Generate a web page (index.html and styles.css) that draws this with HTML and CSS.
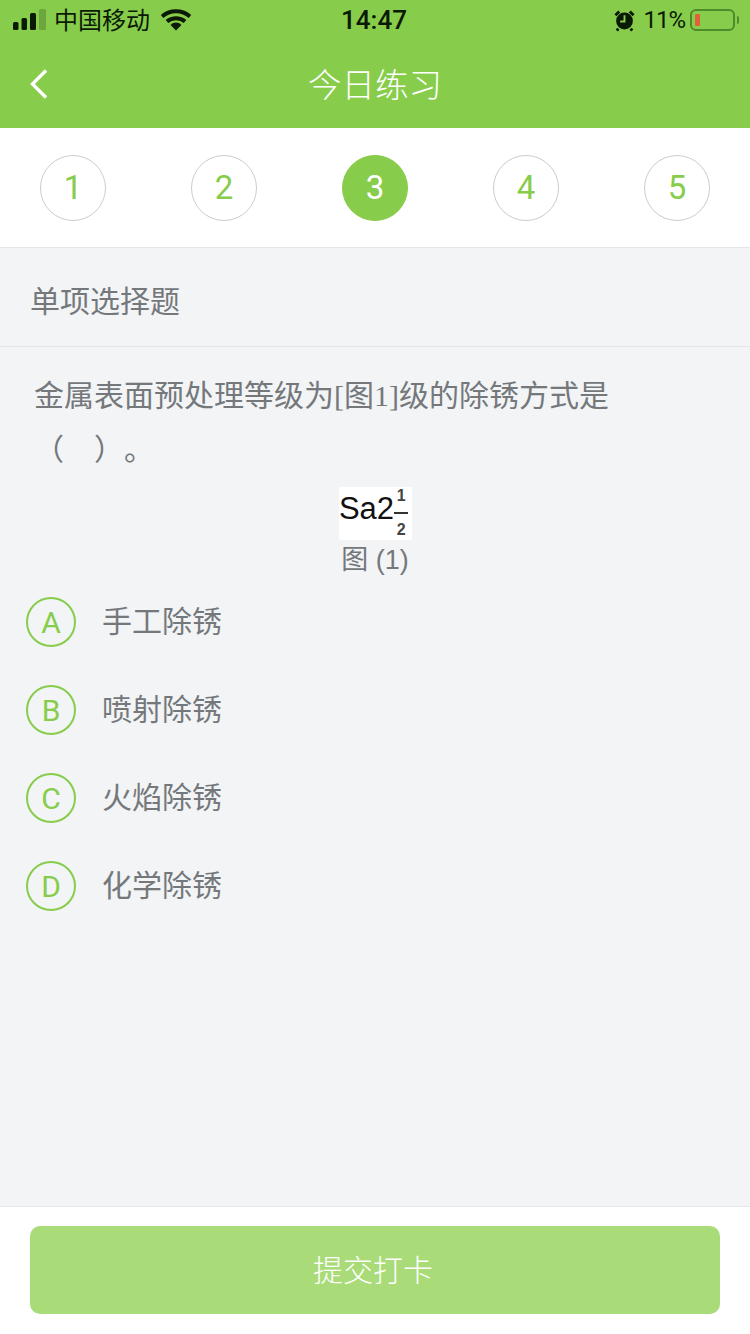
FILE: index.html
```html
<!DOCTYPE html>
<html lang="zh-CN">
<head>
    <meta charset="UTF-8">
    <meta name="viewport" content="width=device-width, initial-scale=1.0">
    <title>今日练习</title>
    <link rel="stylesheet" href="styles.css">
</head>
<body>
    <div class="page">
        <!-- Status bar and title -->
        <header class="top">
            <div class="status-bar">
                <div class="status-left">
                    <svg class="signal" width="36" height="24" viewBox="0 0 36 24">
                        <rect x="0" y="14" width="5.5" height="8" rx="1.5" fill="#0b1a05"/>
                        <rect x="8.5" y="10" width="5.5" height="12" rx="1.5" fill="#0b1a05"/>
                        <rect x="17" y="5" width="6" height="17" rx="1.5" fill="#0b1a05"/>
                        <rect x="26" y="1" width="7" height="21" rx="1.5" fill="#6ba63f"/>
                    </svg>
                    <span class="carrier">中国移动</span>
                    <svg class="wifi" width="30" height="22" viewBox="0 0 30 22">
                        <path d="M1 7.5C9 .5 21 .5 29 7.5" fill="none" stroke="#0b1a05" stroke-width="4"/>
                        <path d="M6 12.5C11 8.3 19 8.3 24 12.5" fill="none" stroke="#0b1a05" stroke-width="4"/>
                        <path d="M9.6 16C12.8 12.8 17.2 12.8 20.4 16L15 21.5Z" fill="#0b1a05"/>
                    </svg>
                </div>
                <div class="time">14:47</div>
                <div class="status-right">
                    <svg class="alarm" width="21" height="23" viewBox="0 0 22 24">
                        <circle cx="11" cy="12.5" r="8.8" fill="#0b1a05"/>
                        <path d="M1.5 6.5L5.5 2.5M20.5 6.5L16.5 2.5M4.5 20.5L3 22.5M17.5 20.5L19 22.5" stroke="#0b1a05" stroke-width="3" fill="none"/>
                        <path d="M11 6.5V13H6.5" stroke="#87cd4b" stroke-width="2" fill="none"/>
                    </svg>
                    <span class="percent">11%</span>
                    <div class="battery"><div class="battery-level"></div></div>
                    <div class="battery-cap"></div>
                </div>
            </div>
            <div class="nav">
                <svg class="back" width="20" height="32" viewBox="0 0 20 32">
                    <path d="M17 2.5L3.5 16L17 29.5" fill="none" stroke="#fff" stroke-width="3.4"/>
                </svg>
                <h1>今日练习</h1>
            </div>
        </header>

        <!-- Question numbers -->
        <div class="steps">
            <div class="step">1</div>
            <div class="step">2</div>
            <div class="step active">3</div>
            <div class="step">4</div>
            <div class="step">5</div>
        </div>

        <main class="content">
            <div class="type-label">单项选择题</div>
            <div class="question">金属表面预处理等级为<span class="serif">[图1]</span>级的除锈方式是<br>（　）。</div>

            <div class="figure">
                <div class="formula">
                    <span class="formula-main">Sa2</span>
                    <span class="fraction"><span>1</span><span class="fraction-bottom">2</span></span>
                </div>
                <div class="caption">图 (1)</div>
            </div>

            <div class="options">
                <div class="option"><div class="letter">A</div><div class="option-text">手工除锈</div></div>
                <div class="option"><div class="letter">B</div><div class="option-text">喷射除锈</div></div>
                <div class="option"><div class="letter">C</div><div class="option-text">火焰除锈</div></div>
                <div class="option"><div class="letter">D</div><div class="option-text">化学除锈</div></div>
            </div>
        </main>

        <footer class="bottom">
            <button class="submit-button" type="button">提交打卡</button>
        </footer>
    </div>
</body>
</html>
```

FILE: styles.css
```css
* {
    box-sizing: border-box;
}

body {
    margin: 0;
    font-family: "Noto Sans CJK SC", "Liberation Sans", sans-serif;
    background-color: #f2f4f6;
    color: #75787b;
}

.page {
    width: 750px;
    height: 1334px;
    display: flex;
    flex-direction: column;
    overflow: hidden;
}

.top {
    height: 128px;
    background-color: #87cd4b;
    flex-shrink: 0;
}

.status-bar {
    height: 40px;
    padding: 0 11px 0 13px;
    display: flex;
    align-items: center;
    justify-content: space-between;
    color: #0b1a05;
}

.status-left,
.status-right {
    width: 300px;
    display: flex;
    align-items: center;
}

.status-right {
    justify-content: flex-end;
}

.signal {
    margin-right: 5px;
}

.carrier {
    font-size: 24px;
    line-height: 38px;
    margin-bottom: 2px;
}

.wifi {
    margin-left: 11px;
}

.time {
    margin-left: -4px;
    font-family: Roboto, "Liberation Sans", sans-serif;
    font-size: 26px;
    font-weight: 500;
}

.alarm {
    margin-right: 8px;
}

.percent {
    font-family: Roboto, "Liberation Sans", sans-serif;
    font-size: 24px;
    letter-spacing: -1px;
    margin-right: 5px;
}

.battery {
    width: 45px;
    height: 22px;
    padding: 3px;
    border: 2px solid #4f8a2c;
    border-radius: 6px;
}

.battery-level {
    width: 5px;
    height: 100%;
    background-color: #e2603a;
    border-radius: 1px;
}

.battery-cap {
    width: 2px;
    height: 8px;
    margin-left: 2px;
    background-color: #4f8a2c;
    border-radius: 0 2px 2px 0;
}

.nav {
    height: 88px;
    padding-left: 29px;
    display: flex;
    align-items: center;
    position: relative;
}

.nav h1 {
    position: absolute;
    left: 0;
    right: 0;
    margin: 0 0 4px;
    text-align: center;
    font-size: 33.5px;
    font-weight: 300;
    color: #fff;
}

.steps {
    height: 120px;
    padding: 0 40px;
    background-color: #fff;
    border-bottom: 1px solid #e4e6e8;
    display: flex;
    align-items: center;
    justify-content: space-between;
    flex-shrink: 0;
}

.step {
    width: 66px;
    height: 66px;
    border: 1px solid #ccc;
    border-radius: 50%;
    display: flex;
    align-items: center;
    justify-content: center;
    font-family: Roboto, "Liberation Sans", sans-serif;
    font-size: 33px;
    color: #87cd4b;
}

.step.active {
    background-color: #87cd4b;
    border-color: #87cd4b;
    color: #fff;
}

.content {
    flex: 1;
}

.type-label {
    height: 99px;
    padding-left: 30px;
    border-bottom: 1px solid #e4e6e8;
    font-size: 30px;
    line-height: 102px;
}

.question {
    padding: 19px 34px 0;
    font-size: 30px;
    line-height: 54px;
    text-spacing-trim: space-all;
}

.serif {
    font-family: "Liberation Serif", "Noto Sans CJK SC", serif;
    line-height: 1;
}

.figure {
    margin-top: 13px;
    display: flex;
    flex-direction: column;
    align-items: center;
}

.formula {
    width: 73px;
    height: 53px;
    padding-right: 3px;
    background-color: #fff;
    display: flex;
    justify-content: center;
    font-family: "Liberation Sans", sans-serif;
    color: #111;
}

.formula-main {
    font-size: 31px;
    line-height: 44px;
}

.fraction {
    display: flex;
    flex-direction: column;
    align-items: center;
    font-size: 16px;
    font-weight: bold;
    line-height: 18px;
    color: #444;
}

.fraction-bottom {
    width: 14px;
    margin-top: 7px;
    padding-top: 7px;
    border-top: 2px solid #333;
    text-align: center;
}

.caption {
    padding-top: 2px;
    font-family: "Liberation Sans", "Noto Sans CJK SC", sans-serif;
    font-size: 27px;
    line-height: 36px;
}

.options {
    padding-left: 26px;
}

.option {
    height: 88px;
    display: flex;
    align-items: center;
    font-size: 30px;
}

.option-text {
    margin-bottom: 7px;
}

.letter {
    width: 50px;
    height: 50px;
    margin-right: 26px;
    border: 2px solid #87cd4b;
    border-radius: 50%;
    display: flex;
    align-items: center;
    justify-content: center;
    font-family: Roboto, "Liberation Sans", sans-serif;
    font-size: 30px;
    color: #87cd4b;
}

.bottom {
    height: 128px;
    padding: 19px 30px 0;
    background-color: #fff;
    border-top: 1px solid #e6e8ea;
    flex-shrink: 0;
}

.submit-button {
    width: 100%;
    height: 88px;
    padding: 0 4px 4px 0;
    border: none;
    border-radius: 10px;
    background-color: #a9dc79;
    color: #fff;
    font-family: inherit;
    font-size: 30px;
    font-weight: 300;
}
```
